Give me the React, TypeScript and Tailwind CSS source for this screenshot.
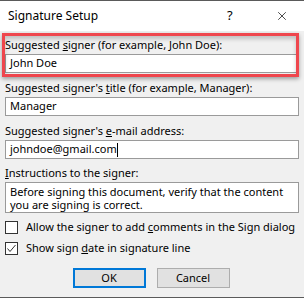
import { X } from 'lucide-react'

function Field({ label, value, caret }: { label: React.ReactNode; value: string; caret?: boolean }) {
  return (
    <div className="flex flex-col">
      <div className="h-[16px] leading-[16px]">{label}</div>
      <div className="mt-[1px] h-[19px] bg-white border border-[#9a9a9a] flex items-center pl-[4px]">
        <span>{value}</span>
        {caret && <span className="w-px h-[14px] bg-black" />}
      </div>
    </div>
  )
}

function Check({ checked, children }: { checked?: boolean; children: React.ReactNode }) {
  return (
    <div className="flex items-center gap-[8px] h-[16px]">
      <div className="w-[13px] h-[13px] border border-[#333333] bg-white flex items-center justify-center shrink-0">
        {checked && (
          <svg width="11" height="11" viewBox="0 0 11 11" fill="none">
            <path d="M1.5 5.5 L4 8.5 L9.5 2" stroke="#333333" strokeWidth="1" />
          </svg>
        )}
      </div>
      <span>{children}</span>
    </div>
  )
}

export default function App() {
  return (
    <div
      className="w-[304px] h-[298px] bg-[#f0f0f0] border-t border-b border-[#5a5a5a] relative text-[11px] text-black overflow-hidden whitespace-nowrap"
      style={{ fontFamily: '"Noto Sans", "Liberation Sans", sans-serif' }}
    >
      {/* 타이틀 바 */}
      <div className="h-[30px] bg-white flex items-center pl-[8px]">
        <span className="flex-1 text-[12px]">Signature Setup</span>
        <span className="w-[10px] text-[13px] mr-[38px]">?</span>
        <X className="w-[14px] h-[14px] mr-[15px]" strokeWidth={1.2} />
      </div>

      {/* 본문 */}
      <div className="px-[5px] pt-[6px] flex flex-col">
        <Field
          label={<>Suggested <u>s</u>igner (for example, John Doe):</>}
          value="John Doe"
        />
        <div className="mt-[7px]">
          <Field
            label={<>Suggested signer's <u>t</u>itle (for example, Manager):</>}
            value="Manager"
          />
        </div>
        <div className="mt-[7px]">
          <Field
            label={<>Suggested signer's <u>e</u>-mail address:</>}
            value="johndoe@gmail.com"
            caret
          />
        </div>
        <div className="mt-[6px] h-[16px] leading-[16px]">
          <u>I</u>nstructions to the signer:
        </div>
        <div className="mt-[1px] h-[31px] bg-white border border-[#9a9a9a] px-[4px] pt-[2px] leading-[13px]">
          Before signing this document, verify that the content
          <br />
          you are signing is correct.
        </div>
        <div className="mt-[6px] flex flex-col gap-[5px]">
          <Check>
            Allow the signer to add <u>c</u>omments in the Sign dialog
          </Check>
          <Check checked>
            Show sign <u>d</u>ate in signature line
          </Check>
        </div>
        <div className="mt-[12px] flex justify-center gap-[11px] pr-[2px]">
          <button className="w-[73px] h-[20px] bg-[#e1e1e1] border-2 border-[#0078d7] flex items-center justify-center">
            OK
          </button>
          <button className="w-[73px] h-[20px] bg-[#e1e1e1] border border-[#adadad] flex items-center justify-center">
            Cancel
          </button>
        </div>
      </div>

      {/* 빨간 강조 박스 */}
      <div className="absolute left-[2px] top-[32px] w-[297px] h-[44px] border-[3px] border-[#ef464d] shadow-[0_2px_4px_rgba(0,0,0,0.35),inset_0_3px_4px_rgba(0,0,0,0.2)]" />
    </div>
  )
}
